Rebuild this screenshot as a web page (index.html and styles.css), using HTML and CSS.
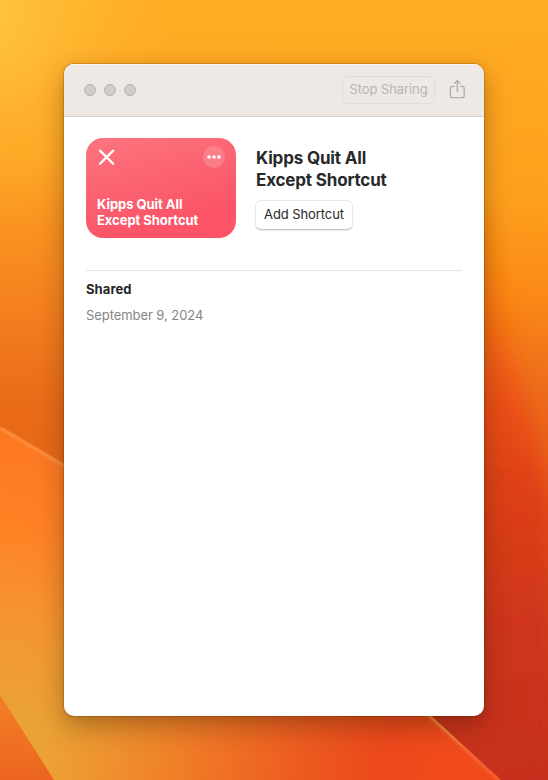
FILE: index.html
```html
<!DOCTYPE html>
<html lang="en">
<head>
<meta charset="utf-8">
<title>Kipps Quit All Except Shortcut</title>
<link rel="stylesheet" href="styles.css">
</head>
<body>
<svg class="wallpaper" viewBox="0 0 548 780" aria-hidden="true">
  <defs>
    <linearGradient id="sky" gradientUnits="userSpaceOnUse" x1="0" y1="0" x2="0" y2="460">
      <stop offset="0" stop-color="#ffad24"/><stop offset=".35" stop-color="#fea222"/><stop offset=".65" stop-color="#f5821f"/><stop offset=".88" stop-color="#e96b18"/><stop offset="1" stop-color="#e76815"/>
    </linearGradient>
    <radialGradient id="glow" gradientUnits="userSpaceOnUse" cx="-20" cy="15" r="215">
      <stop offset="0" stop-color="#ffc943" stop-opacity=".95"/><stop offset="1" stop-color="#ffb02a" stop-opacity="0"/>
    </radialGradient>
    <linearGradient id="right" gradientUnits="userSpaceOnUse" x1="548" y1="0" x2="548" y2="780">
      <stop offset="0" stop-color="#ffad24"/><stop offset=".25" stop-color="#fea01d"/><stop offset=".37" stop-color="#fb8b17"/><stop offset=".5" stop-color="#ec6c1c"/><stop offset=".62" stop-color="#e85a1a"/><stop offset="1" stop-color="#c62d1b"/>
    </linearGradient>
    <linearGradient id="red" gradientUnits="userSpaceOnUse" x1="490" y1="250" x2="510" y2="780">
      <stop offset="0" stop-color="#fb8609"/><stop offset=".12" stop-color="#f87210"/><stop offset=".28" stop-color="#ec5015"/><stop offset=".45" stop-color="#de4017"/><stop offset=".7" stop-color="#cf361b"/><stop offset="1" stop-color="#c62f1c"/>
    </linearGradient>
    <linearGradient id="left" gradientUnits="userSpaceOnUse" x1="60" y1="450" x2="0" y2="710">
      <stop offset="0" stop-color="#fc7822"/><stop offset=".3" stop-color="#ff8124"/><stop offset=".65" stop-color="#f59530"/><stop offset="1" stop-color="#eba234"/>
    </linearGradient>
    <linearGradient id="floor" gradientUnits="userSpaceOnUse" x1="35" y1="725" x2="440" y2="800">
      <stop offset="0" stop-color="#eca134" stop-opacity="0"/><stop offset=".12" stop-color="#ed9a31"/><stop offset=".35" stop-color="#f07f28"/><stop offset=".65" stop-color="#ed5b20"/><stop offset=".85" stop-color="#ec481b"/><stop offset="1" stop-color="#f14b1c"/>
    </linearGradient>
    <linearGradient id="corner" x1="0" y1="0" x2="0" y2="1">
      <stop offset="0" stop-color="#f28027"/><stop offset="1" stop-color="#ec6420"/>
    </linearGradient>
    <filter id="soft" x="-40%" y="-20%" width="180%" height="140%"><feGaussianBlur stdDeviation="11"/></filter>
    <filter id="edge" x="-20%" y="-20%" width="140%" height="140%"><feGaussianBlur stdDeviation="1.3"/></filter>
  </defs>
  <rect width="548" height="780" fill="url(#sky)"/>
  <rect width="250" height="240" fill="url(#glow)"/>
  <rect x="270" width="278" height="780" fill="url(#right)"/>
  <path d="M430 220H486Q506 350 554 510V830H400V220Z" fill="url(#red)" filter="url(#soft)"/>
  <path d="M0 426L90 479V640H350L500 780H0Z" fill="url(#left)"/>
  <path d="M0 428L90 481" stroke="#ffad67" stroke-width="3" opacity=".45" filter="url(#edge)"/>
  <path d="M0 695V640H360L428 716L501 780H0Z" fill="url(#floor)"/>
  <path d="M0 695L54 780H0Z" fill="url(#corner)"/>
  <path d="M424 713L499 780" stroke="#ff7b50" stroke-width="3" opacity=".5" filter="url(#edge)"/>
</svg>
<main class="window">
  <header class="toolbar">
    <div class="lights"><i></i><i></i><i></i></div>
    <button class="stop" disabled>Stop Sharing</button>
    <svg class="share" width="18" height="22" viewBox="0 0 18 22" fill="none" stroke="#b4afac" stroke-width="1.4" stroke-linecap="round" stroke-linejoin="round">
      <path d="M6.3 7.4H4.6Q2.4 7.4 2.4 9.5V16.4Q2.4 18.6 4.6 18.6H14Q16.2 18.6 16.2 16.4V9.5Q16.2 7.4 14 7.4H12.3M9.3 12.8V1.6M6.6 4.2L9.3 1.5L12 4.2"/>
    </svg>
  </header>
  <section class="content">
    <div class="summary">
      <div class="tile">
        <div class="tile-top">
          <svg width="18" height="18" viewBox="0 0 18 18" stroke="#fff" stroke-width="2.3" stroke-linecap="round"><path d="M3 2.6L16.2 15.8M16.2 2.6L3 15.8"/></svg>
          <svg width="22" height="22" viewBox="0 0 22 22" fill="#fff"><circle cx="11" cy="11" r="11" opacity=".17"/><circle cx="6" cy="11" r="1.8"/><circle cx="11" cy="11" r="1.8"/><circle cx="16" cy="11" r="1.8"/></svg>
        </div>
        <div class="tile-name">Kipps Quit All<br>Except Shortcut</div>
      </div>
      <div class="info">
        <h1>Kipps Quit All<br>Except Shortcut</h1>
        <button class="add">Add Shortcut</button>
      </div>
    </div>
    <div class="details">
      <h2>Shared</h2>
      <p>September 9, 2024</p>
    </div>
  </section>
</main>
</body>
</html>
```
FILE: styles.css
```css
* { box-sizing: border-box; }
body {
  margin: 0;
  height: 780px;
  padding: 64px;
  overflow: hidden;
  font-family: Inter, "Liberation Sans", sans-serif;
  font-size: 13px;
  background: #f98b20;
}
.wallpaper { position: absolute; left: 0; top: 0; width: 548px; height: 780px; z-index: -1; }
.window {
  width: 420px;
  height: 652px;
  border-radius: 10px;
  background: #fff;
  overflow: hidden;
  box-shadow: 0 0 0 1px rgba(60,20,0,.16), 0 10px 26px rgba(50,25,0,.34), 0 1px 6px rgba(50,25,0,.08);
}
.toolbar {
  display: flex;
  align-items: center;
  height: 53px;
  padding: 0 18px 0 20px;
  background: #efe9e6;
  border-bottom: 1px solid #d6d2d1;
  box-shadow: inset 0 1px #f8f5f2;
}
.lights { display: flex; gap: 8px; margin-right: auto; }
.lights i { width: 12px; height: 12px; border-radius: 50%; background: #d2cdca; border: 1px solid #b9b4b1; }
button { font: inherit; padding: 0; white-space: nowrap; }
.stop {
  width: 93px;
  height: 28px;
  padding-bottom: 2px;
  border: 1px solid #e0dcd9;
  border-radius: 6px;
  background: transparent;
  color: #b9b5b2;
  letter-spacing: -.08px;
}
.share { margin-left: 13px; margin-top: -1px; }
.content { padding: 21px 22px; }
.summary { display: flex; gap: 19px; height: 133px; border-bottom: 1px solid #e5e5e5; }
.tile {
  display: flex;
  flex-direction: column;
  justify-content: space-between;
  width: 150px;
  height: 100px;
  padding: 8px 11px 10px;
  border-radius: 17px;
  background: linear-gradient(165deg, #fc747f, #fb5567 75%);
  color: #fff;
}
.tile-top { display: flex; justify-content: space-between; }
.tile-top svg { display: block; }
.tile-top svg:first-child { margin-top: 2px; }
.tile-name { font-weight: 700; line-height: 16px; letter-spacing: -.04px; }
.info { padding-top: 9px; }
h1 { margin: 0 0 9px 1px; font-size: 17px; font-weight: 700; line-height: 22px; letter-spacing: -.17px; color: #29292a; }
.add {
  display: block;
  width: 98px;
  height: 30px;
  padding-bottom: 3px;
  border: 1px solid #e9e9e9;
  border-bottom-color: #c8c8c8;
  border-radius: 6px;
  background: #fff;
  color: #272727;
  letter-spacing: -.08px;
  box-shadow: 0 1px 1px rgba(0,0,0,.08);
}
.details { padding-top: 9px; }
h2 { margin: 0; font-size: 13px; font-weight: 700; line-height: 18px; letter-spacing: .08px; color: #262627; }
p { margin: 8px 0 0; line-height: 18px; letter-spacing: -.07px; color: #858586; }
```
